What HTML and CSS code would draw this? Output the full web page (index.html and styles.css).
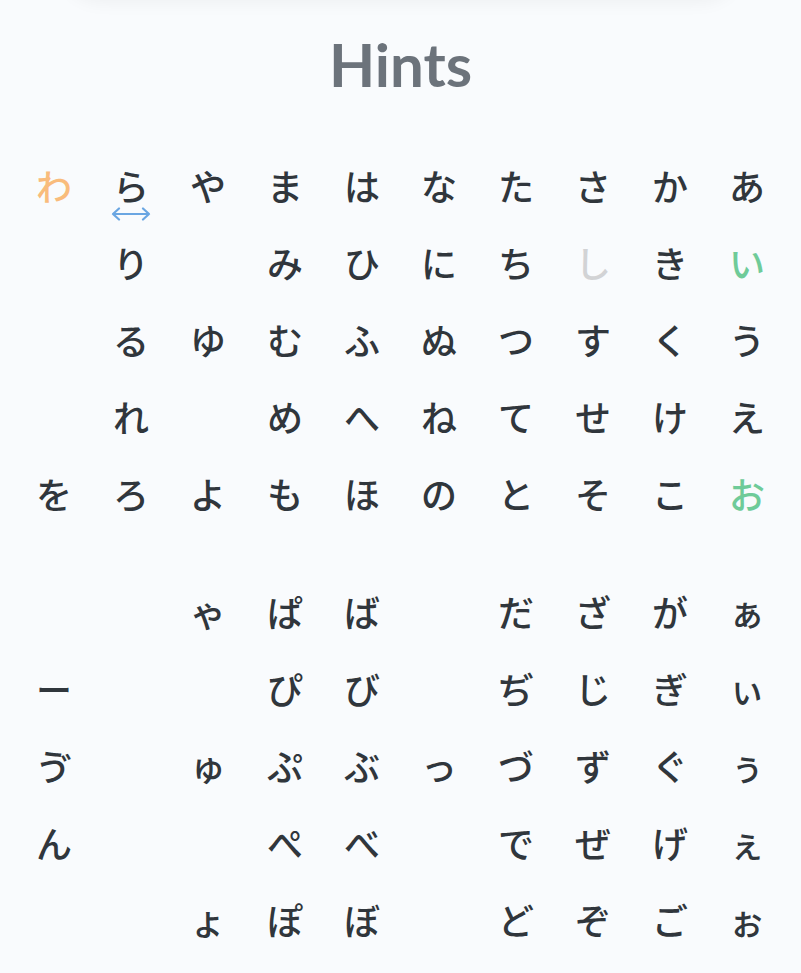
FILE: index.html
```html
<!DOCTYPE html>
<html lang="ja">
<head>
<meta charset="utf-8">
<title>Hints</title>
<link rel="stylesheet" href="styles.css">
</head>
<body>
<div class="topcard"></div>
<h1 class="title">Hints</h1>
<div class="kana">
  <div class="block">
    <span class="c orange">わ</span><span class="c hinted">ら<svg class="arrow" viewBox="0 0 40 14" width="40" height="14"><path d="M2 7H38M8 1.5L2 7L8 12.5M32 1.5L38 7L32 12.5" fill="none" stroke="#6aa6e2" stroke-width="2.2" stroke-linecap="round" stroke-linejoin="round"/></svg></span><span class="c">や</span><span class="c">ま</span><span class="c">は</span><span class="c">な</span><span class="c">た</span><span class="c">さ</span><span class="c">か</span><span class="c">あ</span>
    <span class="c"></span><span class="c">り</span><span class="c"></span><span class="c">み</span><span class="c">ひ</span><span class="c">に</span><span class="c">ち</span><span class="c faded">し</span><span class="c">き</span><span class="c green">い</span>
    <span class="c"></span><span class="c">る</span><span class="c">ゆ</span><span class="c">む</span><span class="c">ふ</span><span class="c">ぬ</span><span class="c">つ</span><span class="c">す</span><span class="c">く</span><span class="c">う</span>
    <span class="c"></span><span class="c">れ</span><span class="c"></span><span class="c">め</span><span class="c">へ</span><span class="c">ね</span><span class="c">て</span><span class="c">せ</span><span class="c">け</span><span class="c">え</span>
    <span class="c">を</span><span class="c">ろ</span><span class="c">よ</span><span class="c">も</span><span class="c">ほ</span><span class="c">の</span><span class="c">と</span><span class="c">そ</span><span class="c">こ</span><span class="c green">お</span>
  </div>
  <div class="block">
    <span class="c"></span><span class="c"></span><span class="c">ゃ</span><span class="c">ぱ</span><span class="c">ば</span><span class="c"></span><span class="c">だ</span><span class="c">ざ</span><span class="c">が</span><span class="c">ぁ</span>
    <span class="c">ー</span><span class="c"></span><span class="c"></span><span class="c">ぴ</span><span class="c">び</span><span class="c"></span><span class="c">ぢ</span><span class="c">じ</span><span class="c">ぎ</span><span class="c">ぃ</span>
    <span class="c">ゔ</span><span class="c"></span><span class="c">ゅ</span><span class="c">ぷ</span><span class="c">ぶ</span><span class="c">っ</span><span class="c">づ</span><span class="c">ず</span><span class="c">ぐ</span><span class="c">ぅ</span>
    <span class="c">ん</span><span class="c"></span><span class="c"></span><span class="c">ぺ</span><span class="c">べ</span><span class="c"></span><span class="c">で</span><span class="c">ぜ</span><span class="c">げ</span><span class="c">ぇ</span>
    <span class="c"></span><span class="c"></span><span class="c">ょ</span><span class="c">ぽ</span><span class="c">ぼ</span><span class="c"></span><span class="c">ど</span><span class="c">ぞ</span><span class="c">ご</span><span class="c">ぉ</span>
  </div>
</div>
</body>
</html>
```

FILE: styles.css
```css
html, body {
  margin: 0;
  padding: 0;
  background: #f9fbfd;
}
body {
  font-family: "Noto Sans CJK JP", sans-serif;
  color: #30363c;
  overflow: hidden;
}
.topcard {
  width: 680px;
  height: 40px;
  margin: -40px auto 0;
  border-radius: 0 0 60px 60px;
  box-shadow: 0 2px 18px rgba(0, 0, 0, 0.05);
}
.title {
  margin: 0;
  padding-top: 28px;
  text-align: center;
  font-family: Lato, sans-serif;
  font-weight: 700;
  font-size: 60px;
  line-height: 72px;
  color: #6c737b;
}
.kana {
  width: 770px;
  margin: 47px auto 0;
  display: flex;
  flex-direction: column;
  gap: 41px;
}
.block {
  display: grid;
  grid-template-columns: repeat(10, 77px);
  grid-auto-rows: 77px;
}
.c {
  position: relative;
  text-align: center;
  font-size: 36px;
  font-weight: 500;
  line-height: 77px;
}
.orange { color: #f9bc7c; }
.green { color: #6fcb99; }
.faded { color: #d2d3d5; }
.arrow {
  position: absolute;
  left: 50%;
  top: 60px;
  transform: translateX(-50%);
}
```
